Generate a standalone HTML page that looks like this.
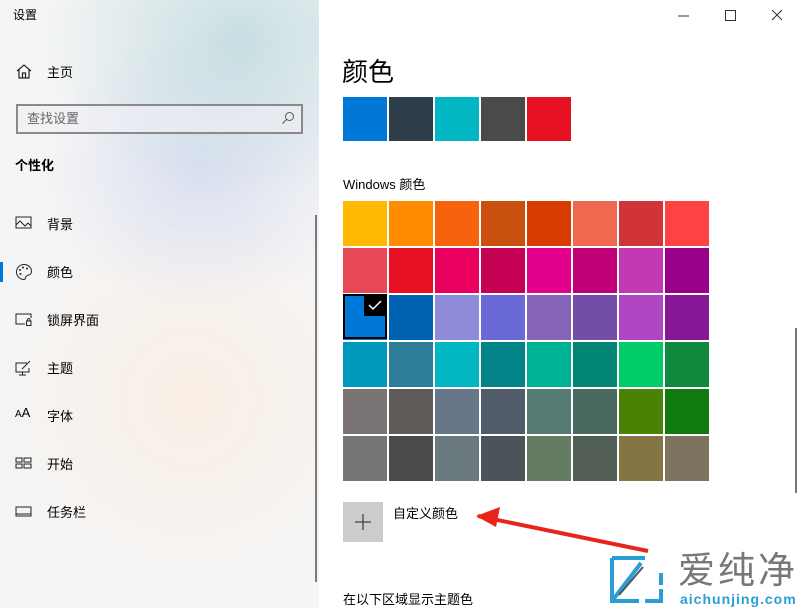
<!DOCTYPE html>
<html><head><meta charset="utf-8"><style>
*{margin:0;padding:0;box-sizing:border-box}
body{width:798px;height:608px;overflow:hidden;position:relative;background:#fff;font-family:"Liberation Sans","Noto Sans CJK SC",sans-serif;color:#000}
#left{position:absolute;left:0;top:0;width:319px;height:608px;
background:radial-gradient(ellipse 200px 160px at 240px 40px,rgba(185,215,220,.75),transparent),
radial-gradient(ellipse 160px 140px at 200px 170px,rgba(205,212,238,.65),transparent),
radial-gradient(ellipse 200px 200px at 190px 400px,rgba(250,235,222,.7),transparent),#f5f5f5}
.a{position:absolute;font-size:13px;white-space:nowrap}
.ic{position:absolute}
.sw{position:absolute;width:44px;height:44px}
</style></head><body>
<div id="left">
<div class="a" style="left:13px;top:6px;font-size:12px">设置</div>
<svg class="ic" style="left:15px;top:63px" width="18" height="16" viewBox="0 0 18 16"><path d="M2 8L9 2L16 8M4 6.5V15H14V6.5M7.5 15V10H10.5V15" fill="none" stroke="#222" stroke-width="1.2"/></svg>
<div class="a" style="left:47px;top:62px">主页</div>
<div style="position:absolute;left:16px;top:104px;width:287px;height:30px;border:2px solid #8a8a8a;background:rgba(240,240,245,.6)"></div>
<div class="a" style="left:27px;top:108px;color:#666">查找设置</div>
<svg class="ic" style="left:281px;top:111px" width="14" height="14" viewBox="0 0 14 14"><circle cx="8.5" cy="5.5" r="4" fill="none" stroke="#555"/><path d="M5.5 8.5L1.5 12.5" stroke="#555"/></svg>
<div class="a" style="left:15px;top:155px;font-weight:bold">个性化</div>
<svg class="ic" style="left:15px;top:216px" width="18" height="14" viewBox="0 0 18 14"><rect x="1" y="1" width="15" height="11" fill="none" stroke="#222"/><path d="M1 9L5 5L10 10L13 7L16 10" fill="none" stroke="#222"/></svg>
<div class="a" style="left:47px;top:214px">背景</div>
<div style="position:absolute;left:0;top:262px;width:3px;height:20px;background:#0078d7"></div>
<svg class="ic" style="left:15px;top:263px" width="18" height="18" viewBox="0 0 18 18"><path d="M9 1.5A7.5 7.5 0 1 0 9 16.5C11 16.5 10 14 11.5 13S16.5 12 16.5 8.5A7.5 7 0 0 0 9 1.5Z" fill="none" stroke="#222"/><circle cx="5" cy="7" r="1" fill="#222"/><circle cx="8" cy="4.5" r="1" fill="#222"/><circle cx="12" cy="5.5" r="1" fill="#222"/><circle cx="5.5" cy="11" r="1" fill="#222"/></svg>
<div class="a" style="left:47px;top:262px">颜色</div>
<svg class="ic" style="left:15px;top:313px" width="18" height="14" viewBox="0 0 18 14"><path d="M10 11H1V1H16V5" fill="none" stroke="#222"/><rect x="11.5" y="8" width="4.5" height="4.5" fill="none" stroke="#222"/><path d="M12.5 8V6.5A1.3 1.3 0 0 1 15 6.5V8" fill="none" stroke="#222"/></svg>
<div class="a" style="left:47px;top:310px">锁屏界面</div>
<svg class="ic" style="left:15px;top:360px" width="18" height="16" viewBox="0 0 18 16"><path d="M12 3H1V12H14V8M4 15H11M7.5 12V15M7 9L15 1" fill="none" stroke="#222"/></svg>
<div class="a" style="left:47px;top:358px">主题</div>
<div class="a" style="left:15px;top:405px;font-size:10px">A<span style="font-size:13px">A</span></div>
<div class="a" style="left:47px;top:406px">字体</div>
<svg class="ic" style="left:15px;top:457px" width="18" height="12" viewBox="0 0 18 12"><rect x="1" y="1" width="6" height="4" fill="none" stroke="#222"/><rect x="9" y="1" width="7" height="4" fill="none" stroke="#222"/><rect x="1" y="7" width="6" height="4" fill="none" stroke="#222"/><rect x="9" y="7" width="7" height="4" fill="none" stroke="#222"/></svg>
<div class="a" style="left:47px;top:454px">开始</div>
<svg class="ic" style="left:15px;top:506px" width="18" height="12" viewBox="0 0 18 12"><rect x="1" y="1" width="15" height="9" fill="none" stroke="#222"/><path d="M1 8H16" stroke="#222"/></svg>
<div class="a" style="left:47px;top:502px">任务栏</div>
<div style="position:absolute;left:315px;top:215px;width:2px;height:367px;background:#7a7a7a"></div>
</div>
<svg class="ic" style="left:676px;top:9px" width="110" height="14"><path d="M2 7H13" stroke="#333"/><rect x="49.5" y="1.5" width="10" height="10" fill="none" stroke="#333"/><path d="M96 1L106 11M106 1L96 11" stroke="#333"/></svg>
<div class="a" style="left:342px;top:52px;font-size:26px">颜色</div>
<div class="sw" style="left:343px;top:97px;background:#0078d7"></div>
<div class="sw" style="left:389px;top:97px;background:#2d3e4a"></div>
<div class="sw" style="left:435px;top:97px;background:#00b7c3"></div>
<div class="sw" style="left:481px;top:97px;background:#4a4a4a"></div>
<div class="sw" style="left:527px;top:97px;background:#e81123"></div>
<div class="a" style="left:343px;top:174px">Windows 颜色</div>
<div id="g"></div>
<script>
var c=[["#ffb900","#ff8c00","#f7630c","#ca5010","#da3b01","#ef6950","#d13438","#ff4343"],
["#e74856","#e81123","#ea005e","#c30052","#e3008c","#bf0077","#c239b3","#9a0089"],
["#0078d7","#0063b1","#8e8cd8","#6b69d6","#8764b8","#744da9","#b146c2","#881798"],
["#0099bc","#2d7d9a","#00b7c3","#038387","#00b294","#018574","#00cc6a","#10893e"],
["#7a7574","#5d5a58","#68768a","#515c6b","#567c73","#486860","#498205","#107c10"],
["#767676","#4c4a48","#69797e","#4a5459","#647c64","#525e54","#847545","#7e735f"]];
var h="";for(var r=0;r<6;r++)for(var k=0;k<8;k++){h+='<div class="sw" style="left:'+(343+k*46)+'px;top:'+(201+r*47)+'px;width:44px;height:45px;background:'+c[r][k]+'"></div>';}
document.getElementById("g").outerHTML=h;
</script>
<div style="position:absolute;left:343px;top:294px;width:44px;height:45px;border:2px solid #000"></div>
<div style="position:absolute;left:364px;top:294px;width:23px;height:22px;background:#000"></div>
<svg class="ic" style="left:367px;top:298px" width="16" height="14"><path d="M2 7L6 11L14 3" fill="none" stroke="#fff" stroke-width="1.5"/></svg>
<div style="position:absolute;left:343px;top:502px;width:40px;height:40px;background:#ccc"></div>
<svg class="ic" style="left:353px;top:512px" width="20" height="20"><path d="M10 2V18M2 10H18" stroke="#444" stroke-width="1.3"/></svg>
<div class="a" style="left:393px;top:503px">自定义颜色</div>
<svg class="ic" style="left:470px;top:505px" width="180" height="50"><path d="M8 11L178 46" stroke="#e8251b" stroke-width="4"/><path d="M6 11L30 2L26 22Z" fill="#e8251b"/></svg>
<div style="position:absolute;left:795px;top:328px;width:2px;height:165px;background:#777"></div>
<div class="a" style="left:343px;top:589px">在以下区域显示主题色</div>
<svg class="ic" style="left:609px;top:555px" width="56" height="50"><path d="M3 3H36M3 3V46H30M3 46L32 8" fill="none" stroke="#2a9fd6" stroke-width="4"/><path d="M52 18V30M52 34V46H36" fill="none" stroke="#2a9fd6" stroke-width="4"/><path d="M10 40L34 12" stroke="#555" stroke-width="2"/></svg>
<div class="a" style="left:678px;top:551px;font-size:37px;color:#777;letter-spacing:3px;line-height:40px">爱纯净</div>
<div class="a" style="left:680px;top:591px;font-size:14px;font-weight:bold;color:#2a9fd6;letter-spacing:1px">aichunjing.com</div>
</body></html>
